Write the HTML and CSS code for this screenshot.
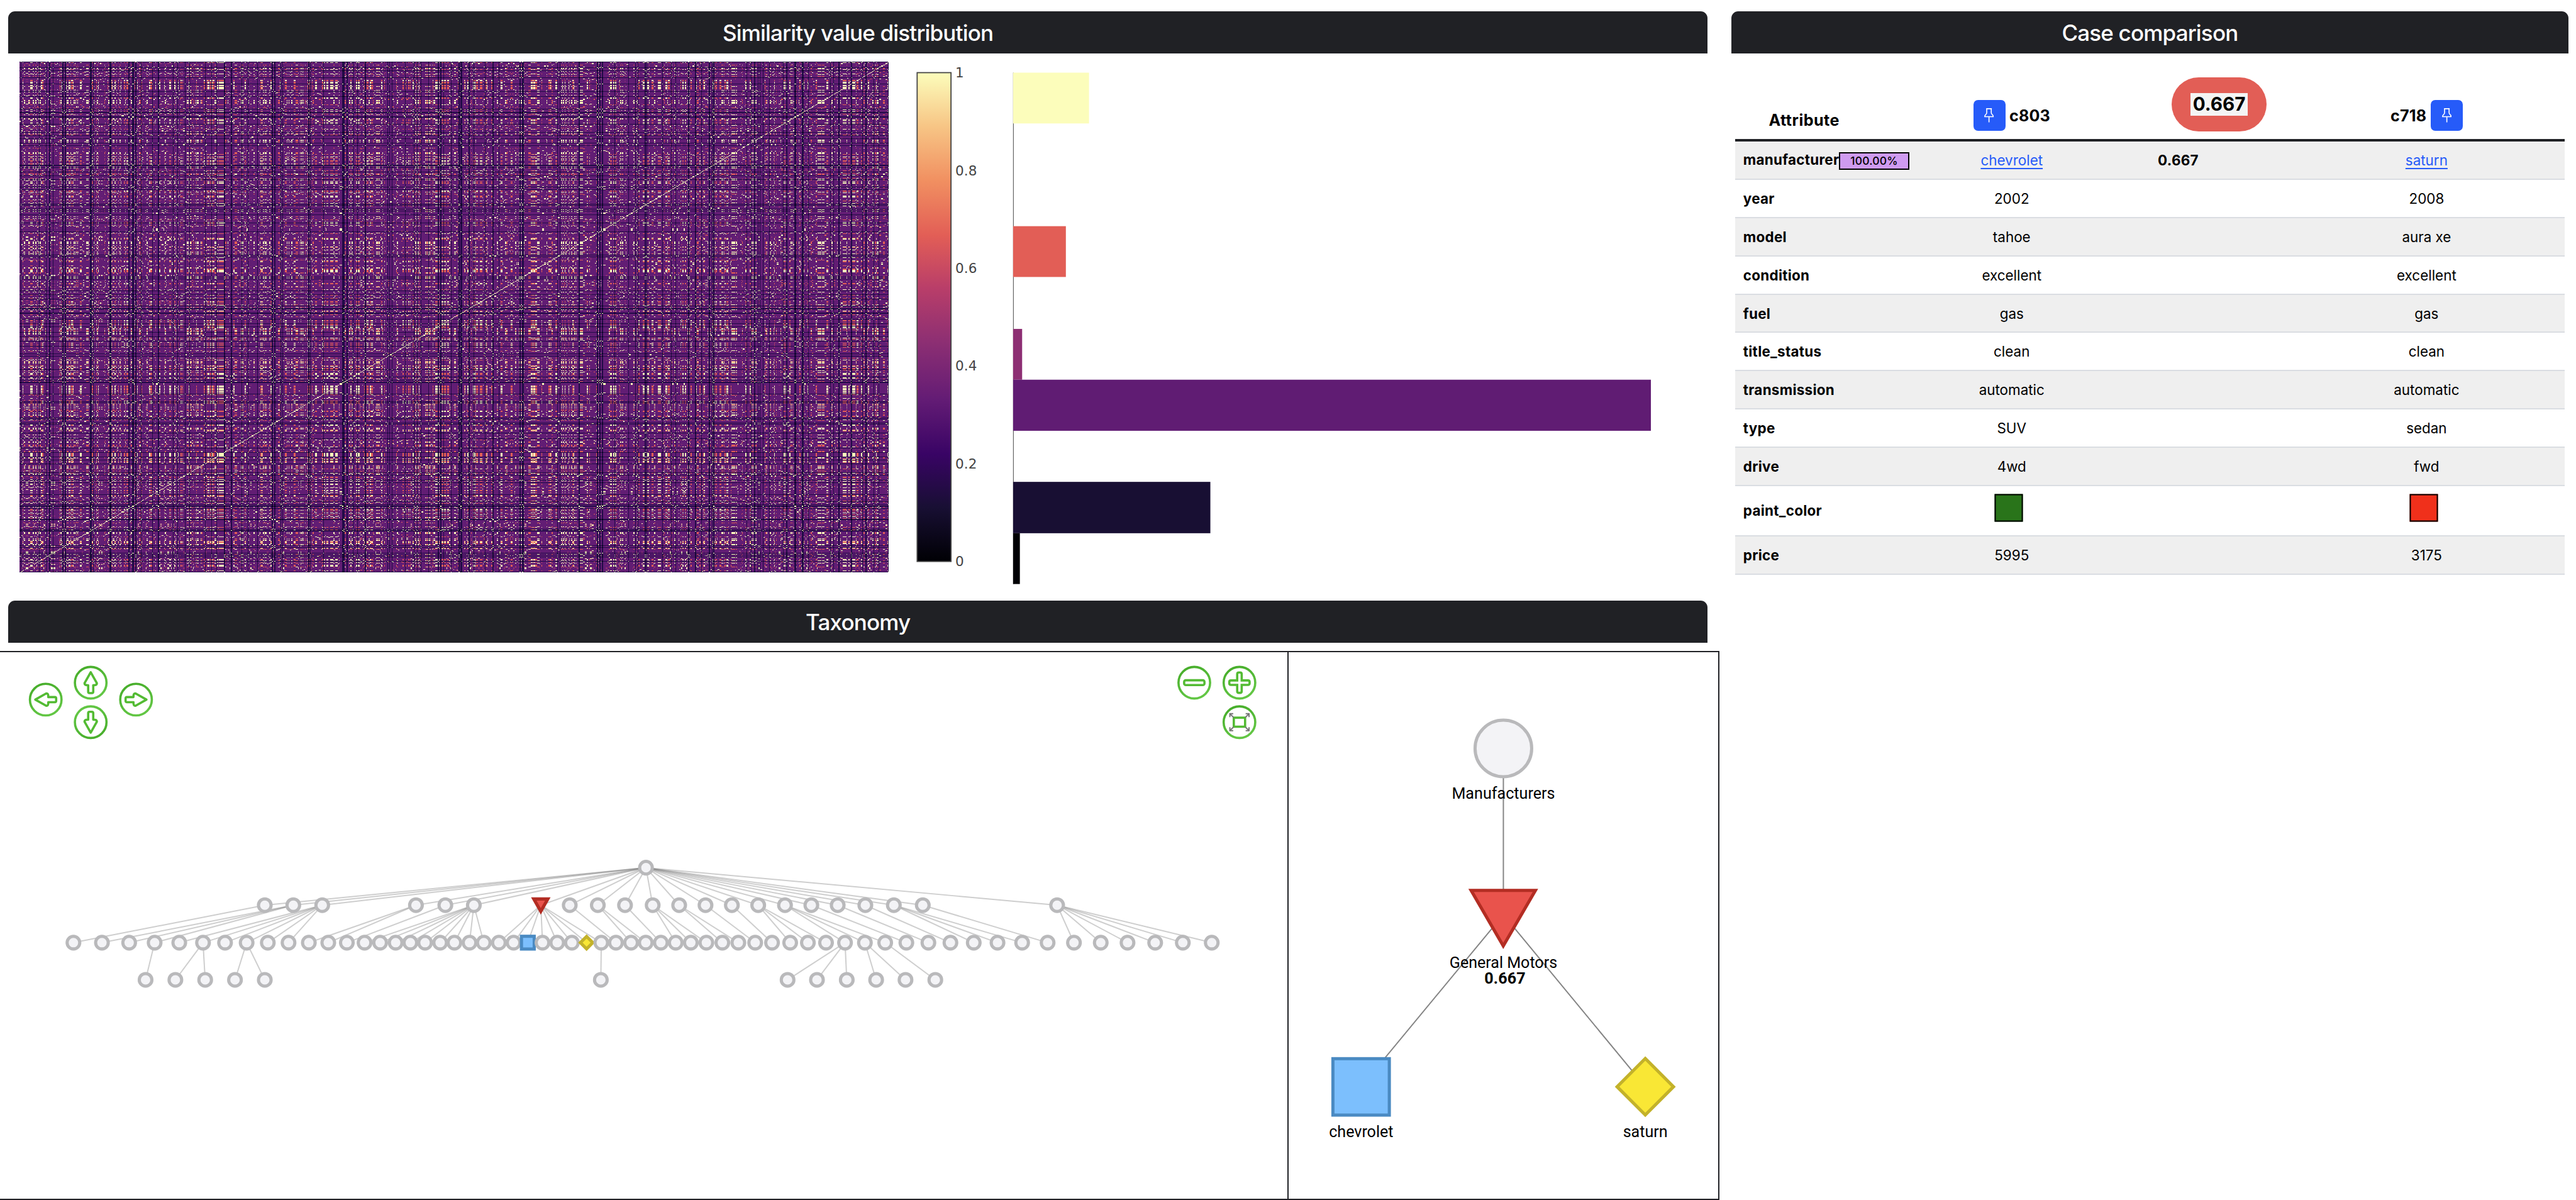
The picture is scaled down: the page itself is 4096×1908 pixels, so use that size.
FILE: index.html
```html
<!DOCTYPE html>
<html lang="en">
<head>
<meta charset="utf-8">
<title>Case similarity explorer</title>
<link rel="stylesheet" href="styles.css">
</head>
<body>
<main class="dashboard">
  <div class="left">
    <section class="panel">
      <h2 class="panel-title">Similarity value distribution</h2>
      <div class="plots">
        <canvas class="heatmap" id="heatmap" width="1382" height="812"></canvas>
        <svg class="histogram" viewBox="1575 95 1465 955">
          <defs>
            <linearGradient id="magma" x1="0" y1="1" x2="0" y2="0">
              <stop offset="0" stop-color="#000004"/>
              <stop offset="0.11" stop-color="#180f33"/>
              <stop offset="0.22" stop-color="#390465"/>
              <stop offset="0.333" stop-color="#641c75"/>
              <stop offset="0.45" stop-color="#8d2f73"/>
              <stop offset="0.56" stop-color="#b93e69"/>
              <stop offset="0.667" stop-color="#e25e56"/>
              <stop offset="0.78" stop-color="#f19061"/>
              <stop offset="0.89" stop-color="#f7c585"/>
              <stop offset="1" stop-color="#fcfdbb"/>
            </linearGradient>
          </defs>
          <rect x="1625.500" y="129" width="60" height="866" fill="url(#magma)" stroke="#444" stroke-width="2"/>
          <g class="tick">
            <text x="1693" y="137" textLength="14">1</text>
            <text x="1693" y="311" textLength="38.500">0.8</text>
            <text x="1693" y="484" textLength="38.500">0.6</text>
            <text x="1693" y="657" textLength="38.500">0.4</text>
            <text x="1693" y="830" textLength="38.500">0.2</text>
            <text x="1693" y="1003">0</text>
          </g>
          <path d="M1796 129V1035" stroke="#444" stroke-width="1.1"/>
          <rect x="1795.500" y="129" width="134.500" height="90" fill="#fcfdbb"/>
          <rect x="1795.500" y="401" width="93.500" height="90" fill="#e25e56"/>
          <rect x="1795.500" y="583" width="16" height="90" fill="#8d2f73"/>
          <rect x="1795.500" y="673" width="1130" height="90.500" fill="#601c73"/>
          <rect x="1795.500" y="854" width="349.500" height="91" fill="#180f33"/>
          <rect x="1795.500" y="945" width="12" height="90" fill="#000004"/>
        </svg>
      </div>
    </section>
    <section class="panel">
      <h2 class="panel-title">Taxonomy</h2>
      <div class="networks">
        <svg class="tree" viewBox="0 1155 2281 969">
          <g id="edges" stroke="#848484" stroke-opacity="0.4" stroke-width="2.2"></g>
          <g id="nodes" fill="#f3f3f6" stroke="#b9b9bb" stroke-width="5.6"></g>
          <defs>
            <linearGradient id="leaf" x1="0" y1="0" x2="0.4" y2="1">
              <stop offset="0" stop-color="#44ab28"/>
              <stop offset="1" stop-color="#62c644"/>
            </linearGradient>
            <circle id="ring" r="28" fill="#fff" stroke="url(#leaf)" stroke-width="4"/>
            <path id="arrow" d="M0 -18.5L11 1Q11 5 4.500 4.500V16Q4.500 18.500 2 18.500H-2Q-4.500 18.500 -4.500 16V4.500Q-11 5 -11 1Z" fill="none" stroke="#53bb33" stroke-width="4" stroke-linejoin="round"/>
          </defs>
          <g transform="translate(160.700 1209)"><use href="#ring"/><use href="#arrow"/></g>
          <g transform="translate(160.700 1279) rotate(180)"><use href="#ring"/><use href="#arrow"/></g>
          <g transform="translate(81 1239)"><use href="#ring"/><use href="#arrow" transform="rotate(-90)"/></g>
          <g transform="translate(241 1239)"><use href="#ring"/><use href="#arrow" transform="rotate(90)"/></g>
          <g transform="translate(2116 1209)"><use href="#ring"/><rect x="-18" y="-4.300" width="36" height="8.600" rx="3" fill="none" stroke="#53bb33" stroke-width="4"/></g>
          <g transform="translate(2196 1209)"><use href="#ring"/><path d="M-4 -15Q-4 -18 -1 -18H1Q4 -18 4 -15V-4H15Q18 -4 18 -1V1Q18 4 15 4H4V15Q4 18 1 18H-1Q-4 18 -4 15V4H-15Q-18 4 -18 1V-1Q-18 -4 -15 -4H-4Z" fill="none" stroke="#53bb33" stroke-width="4"/></g>
          <g transform="translate(2196 1279)"><use href="#ring"/><rect x="-10" y="-8" width="20" height="16" fill="none" stroke="#53bb33" stroke-width="4"/><path d="M-10 -8L-16.500 -14.500M-11 -15H-17V-9M10 -8L16.500 -14.500M11 -15H17V-9M-10 8L-16.500 14.500M-11 15H-17V9M10 8L16.500 14.500M11 15H17V9" fill="none" stroke="#777" stroke-width="2.200"/></g>
        </svg>
        <svg class="detail" viewBox="2283 1155 761 969">
          <path d="M2663.700 1325V1620L2411.600 1925M2663.700 1620L2915.300 1925" fill="none" stroke="#848484" stroke-width="2.200"/>
          <circle cx="2663.700" cy="1325.300" r="50.200" fill="#f3f3f6" stroke="#b9b9bb" stroke-width="5.600"/>
          <path d="M2606.500 1577H2720.500L2663.500 1675.500Z" fill="#e9534c" stroke="#b32d23" stroke-width="5.600"/>
          <rect x="2361.500" y="1875.300" width="100" height="100" fill="#7cbffd" stroke="#4a8ac2" stroke-width="5.600"/>
          <path d="M2915.300 1875L2965.300 1925L2915.300 1975L2865.300 1925Z" fill="#f9e735" stroke="#c3b22a" stroke-width="5.600"/>
          <g class="label">
            <text x="2663.700" y="1414.500" textLength="183">Manufacturers</text>
            <text x="2663.700" y="1714.500" textLength="191">General Motors</text>
            <text class="label-score" x="2666.500" y="1742.500" textLength="73">0.667</text>
            <text x="2411.600" y="2014.500" textLength="114">chevrolet</text>
            <text x="2915.300" y="2014.500" textLength="79">saturn</text>
          </g>
        </svg>
      </div>
    </section>
  </div>
  <section class="panel comparison">
    <h2 class="panel-title">Case comparison</h2>
    <div class="table">
      <div class="row head">
        <div class="attribute">Attribute</div>
        <div class="case"><span class="pin"><svg viewBox="0 0 17 26"><path d="M3.500 1H13.500M4.500 1V8Q4.500 10 2.500 11.500Q1 12.500 1 15H16Q16 12.500 14.500 11.500Q12.500 10 12.500 8V1M8.500 15V25"/></svg></span><span>c803</span></div>
        <div class="total"><div class="pill"><span>0.667</span></div></div>
        <div class="case"><span>c718</span><span class="pin"><svg viewBox="0 0 17 26"><path d="M3.500 1H13.500M4.500 1V8Q4.500 10 2.500 11.500Q1 12.500 1 15H16Q16 12.500 14.500 11.500Q12.500 10 12.500 8V1M8.500 15V25"/></svg></span></div>
      </div>
      <div class="row"><b>manufacturer<span class="weight">100.00%</span></b><a>chevrolet</a><b class="score">0.667</b><a>saturn</a></div>
      <div class="row"><b>year</b><span>2002</span><i></i><span>2008</span></div>
      <div class="row"><b>model</b><span>tahoe</span><i></i><span>aura xe</span></div>
      <div class="row"><b>condition</b><span>excellent</span><i></i><span>excellent</span></div>
      <div class="row"><b>fuel</b><span>gas</span><i></i><span>gas</span></div>
      <div class="row"><b>title_status</b><span>clean</span><i></i><span>clean</span></div>
      <div class="row"><b>transmission</b><span>automatic</span><i></i><span>automatic</span></div>
      <div class="row"><b>type</b><span>SUV</span><i></i><span>sedan</span></div>
      <div class="row"><b>drive</b><span>4wd</span><i></i><span>fwd</span></div>
      <div class="row paint"><b>paint_color</b><span><em class="swatch green"></em></span><i></i><span><em class="swatch red"></em></span></div>
      <div class="row"><b>price</b><span>5995</span><i></i><span>3175</span></div>
    </div>
  </section>
</main>
<script src="charts.js"></script>
</body>
</html>
```
FILE: styles.css
```css
html { font-size: 8.9746px; }
* { box-sizing: border-box; }
body {
  margin: 0;
  width: 4096px;
  height: 1908px;
  overflow: hidden;
  background: #fff;
  color: #000;
  font-family: Inter, "Liberation Sans", sans-serif;
}
.dashboard { display: flex; height: 1908px; }
.left { width: 304.6rem; flex: none; display: flex; flex-direction: column; }
.panel { padding-top: 2rem; }
.panel-title {
  margin: 0 2.1rem 0 1.5rem;
  height: 7.5rem;
  display: flex;
  align-items: center;
  justify-content: center;
  border-radius: 1.2rem 1.2rem 0 0;
  background: #202125;
  color: #fff;
  font-size: 3.9rem;
  font-weight: 500;
  letter-spacing: -0.0235em;
}
.plots { display: flex; height: 94.9rem; }
.heatmap { margin: 13px 0 0 31px; width: 1382px; height: 812px; flex: none; }
.histogram { width: 146.5rem; height: 95.5rem; flex: none; }
.tick { font-family: "DejaVu Sans", sans-serif; font-size: 24px; fill: #444; }
.networks {
  display: flex;
  margin-top: 1.4rem;
  border: 2px solid #202125;
  border-left: 0;
  height: 873px;
}
.tree { flex: none; width: 228.1rem; height: 96.9rem; }
.detail { flex: 1; height: 96.9rem; border-left: 2px solid #202125; }
.label {
  font-family: Roboto, sans-serif;
  font-size: 28px;
  text-anchor: middle;
}
.label-score { font-weight: 700; }

.comparison { flex: 1; }
.comparison .panel-title { margin: 0 1.3rem 0 2.1rem; }
.table { margin: 0 2rem 0 2.8rem; }
.row {
  display: grid;
  grid-template-columns: 30.65rem 36.75rem 36.75rem 36.75rem;
  align-items: center;
  height: 6.78rem;
  border-bottom: 2px solid #dadde2;
  font-size: 2.5rem;
  text-align: center;
}
.row:nth-child(even) { background: #efefef; }
.row b { padding-left: 1.45rem; text-align: left; font-weight: 700; white-space: nowrap; letter-spacing: 0.012em; }
.row b.score { padding: 0 14.5rem 0 0; text-align: center; }
.row a { color: #265bf9; text-decoration: underline; text-underline-offset: 0.4rem; }
.row.head {
  height: 15.6rem;
  align-items: end;
  border-bottom: 4px solid #202125;
  font-size: 2.8rem;
  font-weight: 700;
}
.attribute { padding: 0 6.15rem 1.7rem 0; letter-spacing: 0.018em; }
.case { display: flex; align-items: center; justify-content: center; gap: 0.7rem; padding-bottom: 1.45rem; letter-spacing: 0.008em; }
.pin {
  display: flex;
  align-items: center;
  justify-content: center;
  width: 5.7rem;
  height: 5.5rem;
  border-radius: 0.8rem;
  background: #265bf9;
}
.pin svg { width: 1.7rem; height: 2.6rem; fill: none; stroke: #fff; stroke-width: 1.8; }
.total { display: flex; justify-content: center; padding-bottom: 1.35rem; }
.pill {
  display: flex;
  align-items: center;
  justify-content: center;
  width: 16.9rem;
  height: 9.6rem;
  border-radius: 4.8rem;
  background: #e25e56;
}
.pill span {
  width: 10.1rem;
  line-height: 4rem;
  background: #f4f4f4;
  font-size: 3.3rem;
}
.weight {
  display: inline-block;
  width: 12.4rem;
  height: 3.1rem;
  line-height: 2.7rem;
  border: 2px solid #000;
  background: #cf9bf0;
  font-size: 1.95rem;
  font-weight: 500;
  text-align: center;
  vertical-align: middle;
  letter-spacing: 0.01em;
}
.row.paint { height: 8.95rem; }
.swatch {
  display: block;
  width: 5rem;
  height: 5rem;
  margin: 0 auto;
  transform: translate(-0.5rem, -0.5rem);
  border: 2px solid #000;
}
.green { background: #29741a; }
.red { background: #f0301b; }
```
FILE: charts.js
```js
// Similarity matrix -------------------------------------------------------
const SIZE = 1000;
const CELL = 4.62;
const brand = new Array(SIZE).fill('');

function assign(name, shift, text) {
  for (const part of text.split(' ')) {
    const [start, length] = part.split('+').map(Number);
    const from = Math.round((start + shift) / CELL);
    const count = Math.max(1, Math.floor(length / CELL + 0.3));
    for (let i = from; i < from + count && i < SIZE; i++) if (!brand[i]) brand[i] = name;
  }
}
// D: distant brands, A: largest brand, R: its siblings, E: second largest
assign('D', -15, '21+3 117+3 153+6 171+6 192+3 240+6 255+6 390+9 405+6 492+9 594+3 612+9 630+3 657+6 717+6 750+3 828+6 852+3 894+3 915+6 999+6 1032+3 1059+6 1101+3 1137+6 1194+3 1224+6 1275+6 1356+3 1368+6 1401+6 1410+6 1548+6');
assign('D', 1545, '0+3 66+6 168+15 192+6 225+3 249+3 288+6 408+6 420+3 432+6 501+6 549+3 567+3 585+3 627+3 678+3 690+6 705+6 747+3 789+3 798+9 840+9 867+3 927+3 969+3 1002+3 1113+3 1125+9 1311+3 1323+6 1425+6 1524+3 1536+6 1551+3');
assign('D', 3105, '54+6 129+6 165+6 180+3 216+6 225+6 309+6 354+6 378+6 447+6 486+3 516+6 558+6 573+3 582+3 756+6 780+6 798+6 816+6 825+3 846+3 876+6 951+6 969+6 1011+9 1053+9 1086+3 1200+6 1218+6 1248+3 1311+9 1371+3 1389+6 1431+6 1461+3 1509+6');
assign('A', -15, '38+3 60+6 84+6 98+3 111+6 120+6 151+3 178+3 232+6 264+9 282+6 300+6 312+3 321+3 366+15 406+3 426+6 486+6 510+9 528+6 546+6 573+6 606+6 648+6 690+3 786+6 843+3 903+9 921+3 948+6 957+9 975+6 1050+9 1119+6 1188+15 1230+6 1257+3 1290+6 1308+6 1317+9 1341+6 1434+3 1443+3 1455+12 1503+3 1512+6 1521+6 1539+6');
assign('A', 1545, '123+3 150+6 207+3 219+6 261+6 279+6 309+9 348+9 363+7 381+6 459+6 555+3 570+6 609+9 624+3 630+6 654+9 738+3 765+9 831+3 876+6 942+3 990+6 1032+9 1089+3 1107+6 1116+9 1134+6 1203+15 1254+6 1332+6 1344+3 1356+6 1374+6 1386+9 1401+3 1413+6 1431+20 1527+6');
assign('A', 3105, '27+6 87+6 96+6 114+6 156+6 174+3 240+6 267+6 336+6 375+3 396+6 441+6 453+3 549+6 564+6 591+6 624+9 636+6 660+6 678+18 702+6 786+3 795+3 804+3 810+6 864+3 882+6 900+6 939+6 993+6 1002+6 1035+3 1137+18 1158+15 1209+6 1239+3 1257+3 1290+3 1338+6 1401+3 1425+6 1449+12');
assign('R', -15, '66+3 222+6 462+6 654+3 924+6 939+6 981+3 1107+9 1155+15 1386+9 1479+14 1530+6');
assign('R', 1545, '12+6 57+3 183+6 237+3 330+6 357+6 579+6 618+6 636+6 645+6 852+6 1041+6 1158+15 1281+6');
assign('R', 3105, '63+6 318+6 360+3 495+9 735+3 858+6 915+3 1020+6 1098+6 1380+6 1440+6 1482+9');
assign('E', -15, '70+12 126+9 1077+18');
assign('E', 1545, '108+14 132+6 663+24 1186+12');
assign('E', 3105, '33+9 232+8 285+21 1269+9 1281+8 1298+8');

let seed = 20021;
function random() {
  seed = (seed * 1664525 + 1013904223) % 4294967296;
  return seed / 4294967296;
}
const pool = 'EEEEEFFFFFKKKLLMMNNOOPPQSTUVWXYZ';
for (let i = 0; i < SIZE; i++) {
  if (brand[i]) {
    if (brand[i] === 'D') brand[i] = random() < 0.35 ? 'D1' : random() < 0.6 ? 'D2' : 'D3';
    continue;
  }
  const name = pool[Math.floor(random() * pool.length)];
  brand[i] = name;
  if (random() < 0.3 && i + 1 < SIZE && !brand[i + 1]) brand[++i] = name;
}
const family = { A: 1, R: 1, E: 2, F: 2, L: 3, M: 3 };
const tone = {
  same: [252, 253, 187], close: [226, 94, 86], half: [141, 47, 115],
  base: [98, 29, 116], far: [34, 11, 72], none: [6, 3, 18]
};
function similarity(a, b) {
  if (a === b) return tone.same;
  const farA = a[0] === 'D', farB = b[0] === 'D';
  if (farA && farB) return tone.none;
  if (farA || farB) return tone.far;
  if (family[a] && family[a] === family[b]) return tone.close;
  if ((a === 'K' && 'PQS'.includes(b)) || (b === 'K' && 'PQS'.includes(a))) return tone.half;
  return tone.base;
}
const canvas = document.getElementById('heatmap');
const context = canvas.getContext('2d');
const image = context.createImageData(canvas.width, canvas.height);
for (let y = 0, p = 0; y < canvas.height; y++) {
  const row = SIZE - 1 - Math.floor(y * SIZE / canvas.height);
  for (let x = 0; x < canvas.width; x++, p += 4) {
    const column = Math.floor(x * SIZE / canvas.width);
    const c = similarity(brand[row], brand[column]);
    image.data[p] = c[0];
    image.data[p + 1] = c[1];
    image.data[p + 2] = c[2];
    image.data[p + 3] = 255;
  }
}
context.putImageData(image, 0, 0);

// Taxonomy tree -----------------------------------------------------------
const k = 0.7653;
const near = list => list.map(v => v * k);
const far = list => list.map(v => 1100 + v * k);
const levels = [
  [1144.5],
  [...near([613, 679, 746, 963, 1031, 1097, 1252, 1319, 1384, 1447, 1511]),
    ...far([135, 196, 257, 318, 380, 441, 502, 566, 632, 699, 1010])],
  [...near([170, 236, 299, 358, 415, 470, 521, 571, 620, 668, 715, 760, 803, 844, 880, 916, 950, 984, 1019, 1052, 1087, 1120, 1155, 1189, 1222, 1256, 1290, 1324, 1358, 1392, 1426, 1461, 1495, 1530]),
    ...far([127, 162, 198, 235, 272, 311, 350, 392, 433, 475, 519, 565, 612, 661, 712, 763, 817, 872, 929, 988, 1049, 1111, 1173, 1237, 1301, 1368])],
  [...near([337, 406, 475, 544, 613, 1391]), ...far([386, 454, 523, 591, 659, 728])]
];
const heights = [1536.8, 1603.2, 1669.6, 1735.5];
const childCounts = [
  [22],
  [1, 3, 6, 2, 1, 9, 8, 1, 2, 1, 3, 2, 1, 1, 3, 3, 1, 1, 1, 3, 1, 6]
];
const leaves = [[3, 0], [5, 1], [5, 2], [7, 3], [7, 4], [29, 5], [44, 6], [44, 7], [44, 8], [45, 9], [45, 10], [46, 11]];

const svg = (parent, tag, attributes) => {
  const element = document.createElementNS('http://www.w3.org/2000/svg', tag);
  for (const key in attributes) element.setAttribute(key, attributes[key]);
  parent.appendChild(element);
};
const edges = document.getElementById('edges');
const nodes = document.getElementById('nodes');
const link = (level, from, to) => svg(edges, 'line', {
  x1: levels[level][from], y1: heights[level],
  x2: levels[level + 1][to], y2: heights[level + 1]
});
childCounts.forEach((counts, level) => {
  let next = 0;
  counts.forEach((count, from) => {
    for (let i = 0; i < count; i++) link(level, from, next++);
  });
});
leaves.forEach(([from, to]) => link(2, from, to));

levels.forEach((xs, level) => xs.forEach((x, i) => {
  const y = heights[level];
  if (level === 1 && i === 6) {
    svg(nodes, 'path', { d: `M${x - 12.5} ${y - 11}h25L${x} ${y + 11}Z`, fill: '#e9534c', stroke: '#b32d23' });
  } else if (level === 2 && i === 24) {
    svg(nodes, 'rect', { x: x - 11.3, y: y - 11.3, width: 22.6, height: 22.6, fill: '#7cbffd', stroke: '#4a8ac2' });
  } else if (level === 2 && i === 28) {
    svg(nodes, 'path', { d: `M${x} ${y - 11}l11 11l-11 11l-11 -11Z`, fill: '#f9e735', stroke: '#c3b22a' });
  } else {
    svg(nodes, 'circle', { cx: x, cy: y, r: 11.2 });
  }
}));
```
